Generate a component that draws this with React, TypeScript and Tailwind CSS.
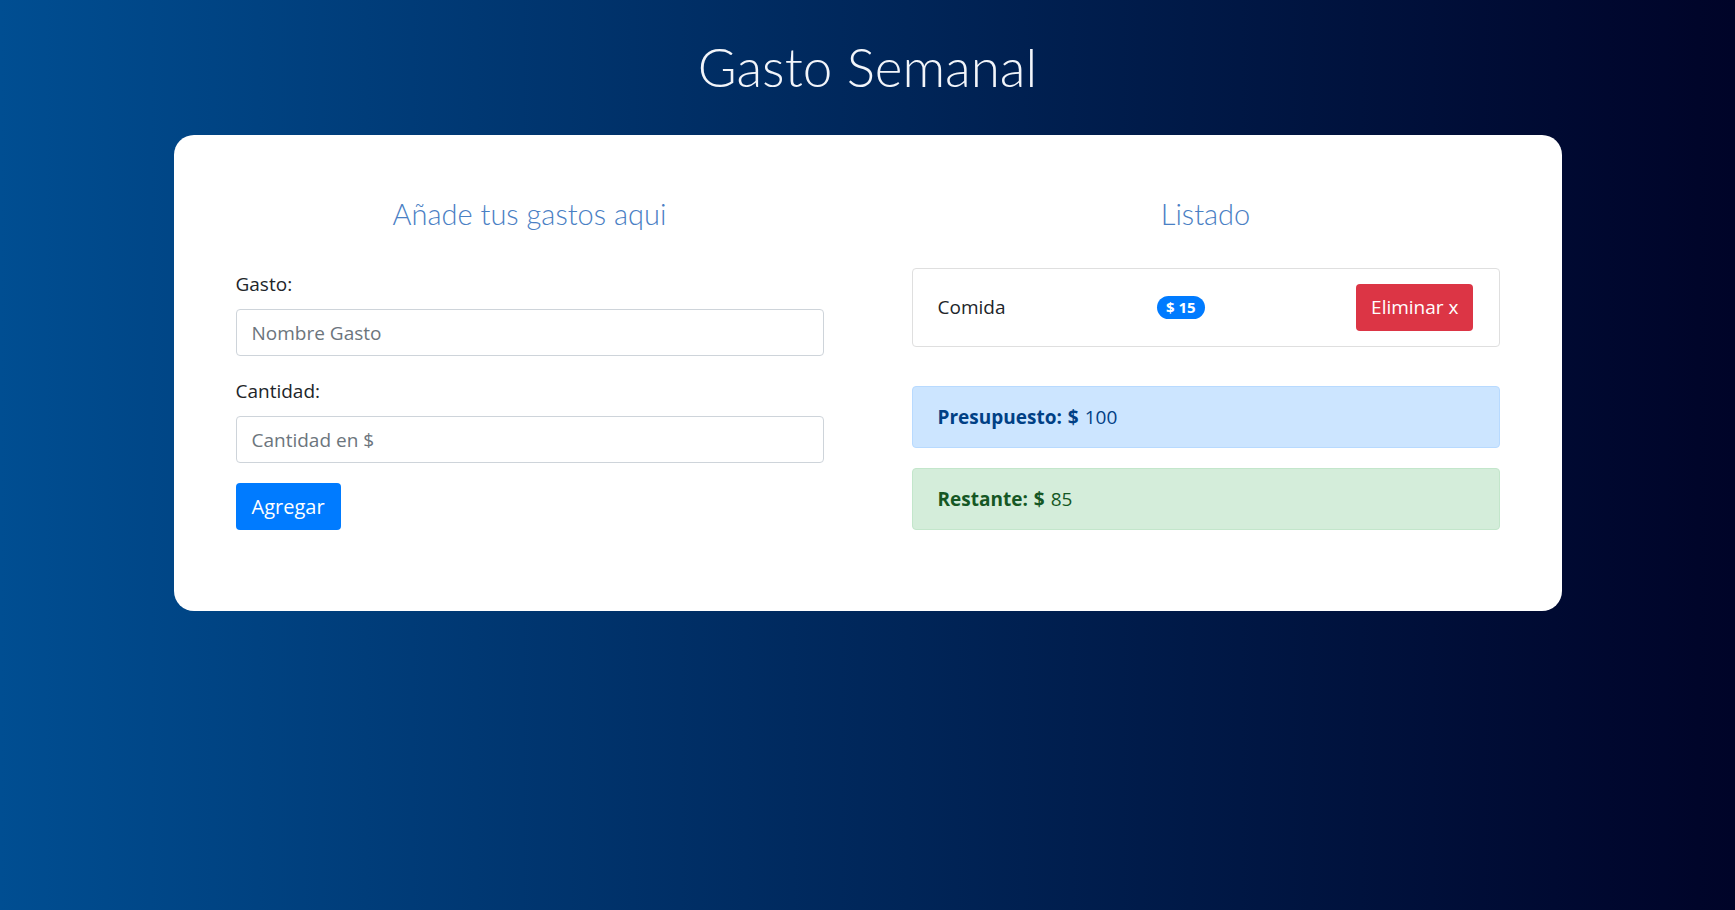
import React from 'react';

const body = "font-['Open_Sans',sans-serif]";

const App: React.FC = () => {
  return (
    <div className="min-h-[910px] bg-gradient-to-r from-[#004e92] to-[#000428] pt-[34px] pb-10">
      <h1 className="text-center text-[53px] leading-[65px] font-light text-[#f2f5fa] font-['Lato',sans-serif] mb-[36px]">
        Gasto Semanal
      </h1>

      <div className={`mx-auto w-4/5 bg-white rounded-[20px] px-[62px] pt-[62px] pb-[81px] ${body}`}>
        <div className="grid grid-cols-2 gap-[88px]">
          {/* Formulario */}
          <div>
            <h2 className="text-center text-[29px] leading-[34px] font-light text-[#4a80c4] font-['Lato',sans-serif] mb-[38px]">
              Añade tus gastos aqui
            </h2>
            <div className="mb-5">
              <label className="block text-[19px] leading-[30px] text-[#212529] mb-[10px]">Gasto:</label>
              <input
                type="text"
                placeholder="Nombre Gasto"
                className="w-full h-[47px] px-[15px] text-[19px] border border-[#ced4da] rounded text-[#495057] placeholder:text-[#6c757d] outline-none"
              />
            </div>
            <div className="mb-5">
              <label className="block text-[19px] leading-[30px] text-[#212529] mb-[10px]">Cantidad:</label>
              <input
                type="number"
                placeholder="Cantidad en $"
                className="w-full h-[47px] px-[15px] text-[19px] border border-[#ced4da] rounded text-[#495057] placeholder:text-[#6c757d] outline-none"
              />
            </div>
            <button className="h-[47px] px-[16px] bg-[#007bff] text-white text-[20px] rounded">
              Agregar
            </button>
          </div>

          {/* Listado */}
          <div>
            <h2 className="text-center text-[29px] leading-[34px] font-light text-[#4a80c4] font-['Lato',sans-serif] mb-[37px]">
              Listado
            </h2>
            <div className="border border-[#dfdfdf] rounded flex items-center justify-between px-[25px] py-[15px] mb-[39px]">
              <span className="text-[19px] text-[#212529]">Comida</span>
              <span className="bg-[#007bff] text-white text-[15px] font-bold leading-none rounded-full px-[9px] py-[4px]">
                $ 15
              </span>
              <button className="h-[47px] px-[15px] bg-[#dc3545] text-white text-[19px] rounded">
                Eliminar x
              </button>
            </div>

            <div className="h-[62px] flex items-center px-[25px] bg-[#cce5ff] border border-[#b8daff] rounded text-[#004085] text-[19px] mb-5">
              <span className="font-bold mr-[6px]">Presupuesto:</span>
              <span className="font-bold mr-[6px]">$</span>
              100
            </div>
            <div className="h-[62px] flex items-center px-[25px] bg-[#d4edda] border border-[#c3e6cb] rounded text-[#155724] text-[19px]">
              <span className="font-bold mr-[6px]">Restante:</span>
              <span className="font-bold mr-[6px]">$</span>
              85
            </div>
          </div>
        </div>
      </div>
    </div>
  );
};

export default App;
